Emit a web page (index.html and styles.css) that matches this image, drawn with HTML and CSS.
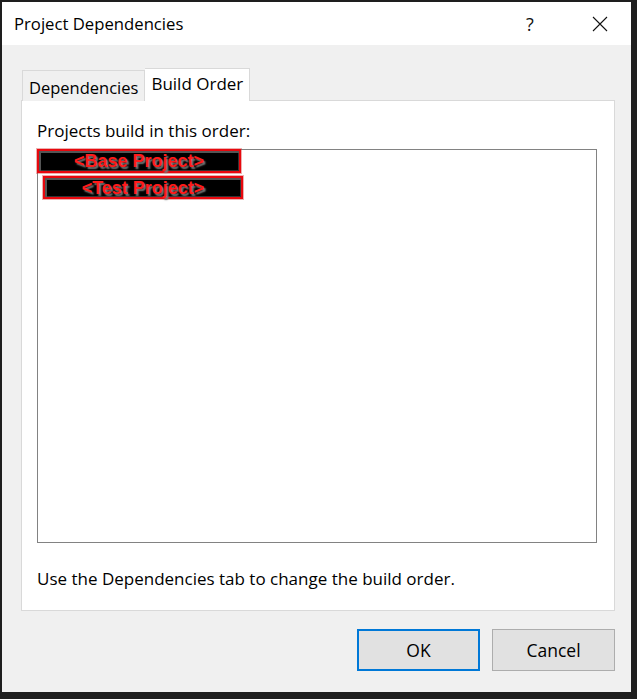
FILE: index.html
```html
<!DOCTYPE html>
<html>
<head>
<meta charset="utf-8">
<title>Project Dependencies</title>
<link rel="stylesheet" href="styles.css">
</head>
<body>
<div class="dialog">
  <div class="titlebar">
    <span class="title">Project Dependencies</span>
    <span class="help">?</span>
    <span class="close">
      <svg width="16" height="16" viewBox="0 0 16 16"><path d="M1 1 L15 15 M15 1 L1 15" stroke="#111" stroke-width="1.1" fill="none"/></svg>
    </span>
  </div>
  <div class="content">
    <div class="tabs">
      <div class="tab">Dependencies</div>
      <div class="tab active">Build Order</div>
    </div>
    <div class="panel">
      <div class="label">Projects build in this order:</div>
      <div class="listbox">
        <div class="item first">&lt;Base Project&gt;</div>
        <div class="item second">&lt;Test Project&gt;</div>
      </div>
      <div class="hint">Use the Dependencies tab to change the build order.</div>
    </div>
    <div class="buttons">
      <button class="btn default">OK</button>
      <button class="btn">Cancel</button>
    </div>
  </div>
</div>
</body>
</html>
```
FILE: styles.css
```css
html, body {
  margin: 0;
  padding: 0;
  width: 637px;
  height: 699px;
  overflow: hidden;
  background: #1e1e1e;
}
.dialog {
  margin: 2px 0 0 2px;
  width: 629px;
  height: 690px;
  background: #f0f0f0;
  display: flex;
  flex-direction: column;
  font-family: "Open Sans", "Noto Sans", sans-serif;
  color: #000;
}
.titlebar {
  height: 43px;
  background: #fff;
  display: flex;
  align-items: center;
  padding-left: 12px;
}
.title {
  font-size: 16.7px;
  flex: 1;
}
.help {
  font-size: 18px;
  font-weight: 400;
  width: 20px;
  text-align: center;
  margin-right: 52px;
  color: #111;
}
.close {
  width: 16px;
  height: 16px;
  margin-right: 23px;
  display: flex;
}
.content {
  flex: 1;
  padding: 23px 16px 0 19px;
  display: flex;
  flex-direction: column;
}
.tabs {
  display: flex;
  align-items: flex-end;
  height: 33px;
  margin-bottom: -1px;
  position: relative;
  z-index: 1;
}
.tab {
  font-size: 16.5px;
  height: 31px;
  box-sizing: border-box;
  padding: 2px 6px 0 6px;
  margin-left: 1px;
  border: 1px solid #d9d9d9;
  border-bottom: none;
  background: #f0f0f0;
  display: flex;
  align-items: center;
}
.tab.active {
  font-size: 17px;
  height: 33px;
  margin-left: 0;
  background: #fff;
  border-left: none;
  padding: 0 6px 4px 6px;
}
.panel {
  height: 511px;
  box-sizing: border-box;
  background: #fff;
  border: 1px solid #d9d9d9;
  padding: 18px 17px 0 15px;
  display: flex;
  flex-direction: column;
}
.label {
  font-size: 17px;
  line-height: 23px;
  margin-bottom: 7px;
}
.listbox {
  height: 394px;
  box-sizing: border-box;
  border: 1px solid #828282;
  display: flex;
  flex-direction: column;
  align-items: flex-start;
}
.item {
  background: #000;
  border: 2px solid #e8080e;
  box-shadow: inset 2px 2px 0 #555, inset -1px -1px 0 #333, 0 0 0 1px rgba(200,30,30,0.35);
  color: #ff1a1a;
  font-family: "Liberation Sans", Arial, sans-serif;
  font-weight: bold;
  font-size: 18px;
  line-height: 20px;
  text-align: center;
  text-shadow: 2px 2px 1.5px #777;
  box-sizing: border-box;
}
.item.first {
  width: 204px;
  height: 24px;
  margin: -1px 0 0 -1px;
}
.item.second {
  width: 200px;
  height: 23px;
  margin: 3px 0 0 5px;
}
.hint {
  font-size: 17px;
  line-height: 23px;
  margin-top: 24px;
}
.buttons {
  display: flex;
  justify-content: flex-end;
  gap: 12px;
  margin-top: 18px;
}
.btn {
  width: 123px;
  height: 42px;
  box-sizing: border-box;
  background: #e1e1e1;
  border: 1px solid #adadad;
  font-family: "Open Sans", "Noto Sans", sans-serif;
  font-size: 17.5px;
  color: #000;
  padding: 0;
}
.btn.default {
  border: 2px solid #0078d7;
}
```
